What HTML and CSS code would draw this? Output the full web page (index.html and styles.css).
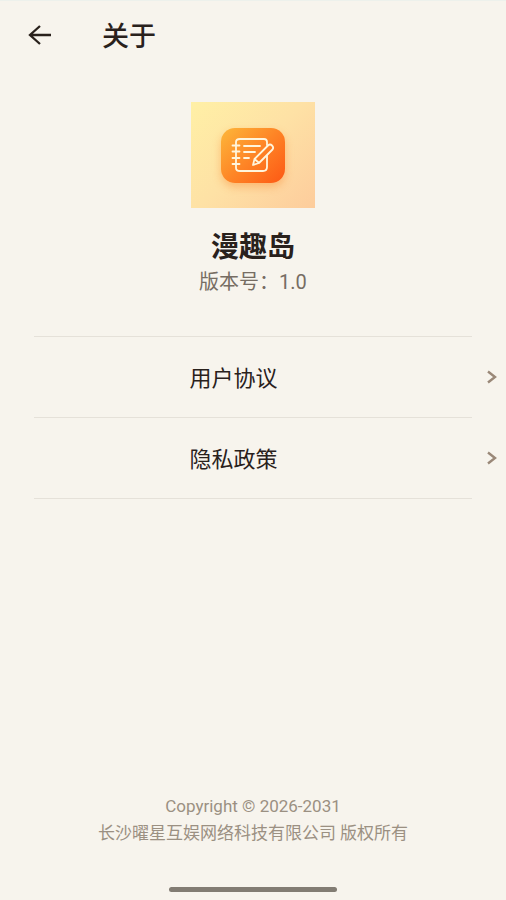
FILE: index.html
```html
<!DOCTYPE html>
<html lang="zh-CN">
<head>
<meta charset="utf-8">
<meta name="viewport" content="width=device-width, initial-scale=1">
<title>关于</title>
<link rel="stylesheet" href="styles.css">
</head>
<body>
<div class="page">
  <header class="bar">
    <button class="back" type="button" aria-label="返回">
      <svg width="24" height="22" viewBox="0 0 24 22" fill="none" stroke="currentColor" stroke-width="2.3"><path d="M12 2 2 11l10 9M2 11h21"/></svg>
    </button>
    <h1 class="title">关于</h1>
  </header>
  <main class="main">
    <section class="app">
      <div class="logo">
        <div class="badge">
          <svg width="44" height="36" viewBox="0 0 44 36" fill="none" stroke="#fff5dc" stroke-width="1.8" stroke-linecap="round" stroke-linejoin="round">
            <path d="M36 8V5Q36 2 33 2H9Q5 2 5 5V31Q5 34 9 34H32Q36 34 36 30V19"/>
            <path d="M1.500 8.500h7M1.500 14.500h7M1.500 21h7M1.500 27h7M13 9h16M13 15h11M13 21h5"/>
            <path d="M22 28l1.500-6L37 8.500q2-2 4 0t.500 4L28 26zM23.500 22l4.500 4"/>
          </svg>
        </div>
      </div>
      <h2 class="name">漫趣岛</h2>
      <p class="version">版本号：1.0</p>
    </section>
    <nav class="links">
      <a class="link" href="#terms"><span class="label">用户协议</span><svg class="chevron" width="10" height="14" viewBox="0 0 10 14" fill="none" stroke="currentColor" stroke-width="2.4"><path d="M1 1.500 8 7l-7 5.500"/></svg></a>
      <a class="link" href="#privacy"><span class="label">隐私政策</span><svg class="chevron" width="10" height="14" viewBox="0 0 10 14" fill="none" stroke="currentColor" stroke-width="2.4"><path d="M1 1.500 8 7l-7 5.500"/></svg></a>
    </nav>
  </main>
  <footer class="footer">
    <p class="copy">Copyright © 2026-2031</p>
    <p class="copy">长沙曜星互娱网络科技有限公司 版权所有</p>
    <div class="handle"></div>
  </footer>
</div>
</body>
</html>
```
FILE: styles.css
```css
* {
  box-sizing: border-box;
}

body {
  margin: 0;
  background: #f7f4ed;
  color: #29211c;
  font-family: Roboto, "Noto Sans CJK SC", sans-serif;
}

.page {
  min-height: 100vh;
  display: flex;
  flex-direction: column;
  border-top: 1px solid #edf1ec;
}

.bar {
  display: flex;
  align-items: center;
  height: 68px;
  padding: 0 28px;
  gap: 50px;
}

.back {
  display: flex;
  padding: 0;
  border: 0;
  background: none;
  color: inherit;
}

.title,
.name,
.version,
.copy {
  margin: 0;
}

.title {
  padding-top: 3px;
  font-size: 27px;
  line-height: 32px;
  font-weight: 500;
}

.main {
  flex: 1;
}

.app {
  display: flex;
  flex-direction: column;
  align-items: center;
  padding: 33px 0 40px;
}

.logo {
  display: flex;
  align-items: center;
  justify-content: center;
  width: 124px;
  height: 106px;
  background: linear-gradient(135deg, #fff0a6, #fee1a5 50%, #fdcc9c);
}

.badge {
  display: flex;
  align-items: center;
  justify-content: center;
  width: 64px;
  height: 55px;
  border-radius: 14px;
  background: linear-gradient(135deg, #fdb73a, #fe8526 50%, #fd5814);
  box-shadow: 0 4px 8px rgba(250, 130, 40, 0.4);
}

.name {
  margin-top: 22px;
  font-size: 28px;
  line-height: 36px;
  font-weight: 700;
}

.version {
  margin-top: 3px;
  font-size: 20px;
  line-height: 27px;
  color: #766d63;
}

.link {
  display: grid;
  grid-template-columns: 1fr 39px;
  grid-template-rows: 1px 80px;
  align-items: center;
  color: inherit;
  text-decoration: none;
}

.link::before,
.link:last-child::after {
  content: "";
  grid-column: 1 / -1;
  height: 1px;
  margin: 0 34px;
  background: #e5e1d9;
}

.label {
  padding-top: 3px;
  text-align: center;
  font-size: 22px;
  line-height: 32px;
}

.chevron {
  justify-self: end;
  margin-right: 9px;
  color: #9a8878;
}

.footer {
  display: flex;
  flex-direction: column;
  align-items: center;
  padding-bottom: 8px;
  color: #9b9082;
}

.copy {
  font-size: 17px;
  line-height: 27px;
}

.handle {
  width: 33.333%;
  height: 5px;
  margin-top: 40px;
  border-radius: 3px;
  background: #827c73;
}
```
